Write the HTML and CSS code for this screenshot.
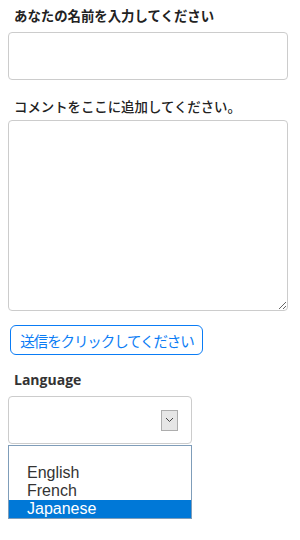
FILE: index.html
```html
<!DOCTYPE html>
<html lang="ja">
<head>
  <meta charset="UTF-8">
  <meta name="viewport" content="width=device-width, initial-scale=1.0">
  <title>コメントフォーム</title>
  <link rel="stylesheet" href="styles.css">
</head>
<body>
  <form class="comment-form">
    <label class="field-label name-label" for="name">あなたの名前を入力してください</label>
    <input class="text-input" type="text" id="name">

    <label class="field-label comment-label" for="comment">コメントをここに追加してください。</label>
    <textarea class="comment-box" id="comment"></textarea>

    <button class="submit-button" type="button">送信をクリックしてください</button>

    <div class="field-label lang-label">Language</div>
    <div class="lang-select">
      <span class="arrow-box">
        <svg width="9" height="6" viewBox="0 0 9 6"><path d="M1 1l3.5 3.5L8 1" fill="none" stroke="#444" stroke-width="1"/></svg>
      </span>
    </div>
    <ul class="lang-list">
      <li class="lang-option">&nbsp;</li>
      <li class="lang-option">English</li>
      <li class="lang-option">French</li>
      <li class="lang-option selected">Japanese</li>
    </ul>
  </form>
</body>
</html>
```

FILE: styles.css
```css
body {
  margin: 0;
  background-color: #fff;
  font-family: "Noto Sans CJK JP", "Liberation Sans", sans-serif;
  color: #222;
}

.comment-form {
  display: flex;
  flex-direction: column;
  align-items: flex-start;
  padding: 0 12px 0 8px;
}

.field-label {
  display: block;
  padding-left: 6px;
  font-size: 13.4px;
  line-height: 20px;
  height: 20px;
}

.name-label {
  font-weight: bold;
  margin-top: 5px;
  margin-bottom: 7px;
}

.comment-label {
  font-weight: 500;
  margin-top: 16px;
  margin-bottom: 4px;
}

.text-input, .comment-box {
  box-sizing: border-box;
  width: 280px;
  border: 1px solid #ccc;
  border-radius: 4px;
  margin: 0;
  font-family: inherit;
}

.text-input {
  height: 48px;
}

.comment-box {
  height: 191px;
  resize: vertical;
}

.submit-button {
  box-sizing: border-box;
  margin: 14px 0 0 2px;
  height: 30px;
  width: 193px;
  padding: 0 0 0 1px;
  background-color: #fff;
  border: 1px solid #0a7cf5;
  border-radius: 6px;
  color: #0a7cf5;
  font-family: "Noto Sans CJK JP", sans-serif;
  font-size: 14.5px;
  font-weight: 400;
  letter-spacing: -1.1px;
  cursor: pointer;
}

.lang-label {
  font-family: "Open Sans", "Liberation Sans", sans-serif;
  font-size: 14px;
  font-weight: bold;
  color: #333;
  margin-top: 15px;
  margin-bottom: 6px;
}

.lang-select {
  box-sizing: border-box;
  width: 184px;
  height: 48px;
  border: 1px solid #ccc;
  border-radius: 4px;
  display: flex;
  align-items: center;
  justify-content: flex-end;
  padding-right: 13px;
}

.arrow-box {
  box-sizing: border-box;
  width: 17px;
  height: 21px;
  background-color: #e6e6e6;
  border: 1px solid #adadad;
  display: flex;
  align-items: center;
  justify-content: center;
}

.lang-list {
  box-sizing: border-box;
  width: 184px;
  margin: 1px 0 0;
  padding: 0;
  list-style: none;
  border: 1px solid #7f9db9;
  font-family: "Liberation Sans", Arial, sans-serif;
  font-size: 16px;
}

.lang-option {
  height: 18px;
  line-height: 18px;
  padding-left: 18px;
  color: #333;
}

.lang-option.selected {
  background-color: #0078d7;
  color: #fff;
}
```
